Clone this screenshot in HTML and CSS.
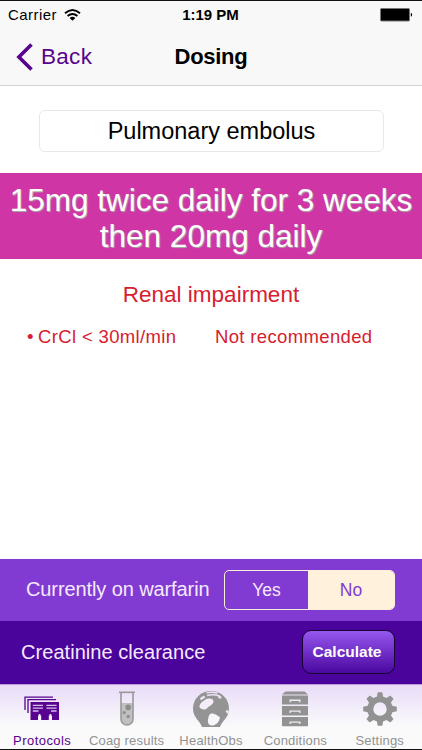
FILE: index.html
```html
<!DOCTYPE html>
<html lang="en">
<head>
    <meta charset="UTF-8">
    <meta name="viewport" content="width=device-width, initial-scale=1.0">
    <title>Dosing</title>
    <link rel="stylesheet" href="styles.css">
</head>
<body>
    <header>
        <div class="status-bar">
            <div class="carrier">
                <span>Carrier</span>
                <svg class="wifi" width="17" height="12" viewBox="0 0 17 12">
                    <path d="M1 4.3 Q8.5 -2.2 16 4.3" fill="none" stroke="#000" stroke-width="1.9"/>
                    <path d="M3.6 7 Q8.5 2.8 13.4 7" fill="none" stroke="#000" stroke-width="1.9"/>
                    <path d="M5.6 9 Q8.5 6.6 11.4 9 L8.5 11.8 Z"/>
                </svg>
            </div>
            <div class="time">1:19 PM</div>
            <svg class="battery" width="33" height="14" viewBox="0 0 33 14">
                <rect x="0.5" y="0.5" width="29" height="12.5" rx="1" stroke="#777" stroke-width="1"/>
                <path d="M30.8 4.7 Q32.2 5.2 32.2 6.8 Q32.2 8.3 30.8 8.8 Z"/>
            </svg>
        </div>
        <nav class="nav-bar">
            <a class="back" href="#">
                <svg width="17" height="28" viewBox="0 0 17 28">
                    <path d="M15.5 1.4 L2.9 14 L15.5 26.6" fill="none" stroke="#57038f" stroke-width="3.6"/>
                </svg>
                <span>Back</span>
            </a>
            <h1>Dosing</h1>
        </nav>
    </header>
    <main>
        <div class="condition">Pulmonary embolus</div>
        <div class="dose">15mg twice daily for 3 weeks<br>then 20mg daily</div>
        <h2>Renal impairment</h2>
        <div class="renal">
            <span class="bullet">•</span>
            <span class="range">CrCl &lt; 30ml/min</span>
            <span class="advice">Not recommended</span>
        </div>
    </main>
    <div class="row warfarin">
        <span class="row-label">Currently on warfarin</span>
        <div class="segmented">
            <button class="segment">Yes</button>
            <button class="segment selected">No</button>
        </div>
    </div>
    <div class="row creatinine">
        <span class="row-label">Creatinine clearance</span>
        <button class="calculate">Calculate</button>
    </div>
    <footer class="tabs">
        <a class="tab active" href="#">
            <svg width="36" height="26" viewBox="0 0 36 26">
                <path d="M1 14 V1.2 H29 M4 17 V3.7 H32" fill="none" stroke="#57038f" stroke-width="1.3"/>
                <path fill="#57038f" d="M6.5 6 H35 V24 H28 V19.5 H24.8 V24 H17.2 V19.5 H14 V24 H6.5 Z"/>
                <path d="M8.8 9.4 H19 M8.8 12.2 H19 M8.8 15 H14.5 M22.4 9.4 H32.6 M22.4 12.2 H32.6 M27 15 H32.6" fill="none" stroke="#d8bdec" stroke-width="1.3"/>
                <path d="M14.8 18 H16.4 V20 H14.8 Z M25.6 18 H27.2 V20 H25.6 Z" fill="#efe6f8"/>
            </svg>
            <span>Protocols</span>
        </a>
        <a class="tab" href="#">
            <svg width="18" height="36" viewBox="0 0 18 36">
                <path d="M3 12 H15 V28 A6 6 0 0 1 3 28 Z" fill="#c0c0c1"/>
                <path d="M3 1.5 V28 A6 6 0 0 0 15 28 V1.5" fill="none" stroke="#999" stroke-width="1.6"/>
                <path d="M1 1.3 H17" stroke="#999" stroke-width="1.6"/>
                <circle cx="10.2" cy="16.4" r="2.8" fill="#8d8d8d"/>
                <circle cx="6.2" cy="21.6" r="1.6" fill="#8d8d8d"/>
                <circle cx="10.2" cy="25.4" r="1.7" fill="#8d8d8d"/>
            </svg>
            <span>Coag results</span>
        </a>
        <a class="tab" href="#">
            <svg width="38" height="38" viewBox="0 0 38 38">
                <path d="M10 37 C8 30.5 1 28 1 18.5 A18 17.6 0 0 1 37 18.5 C37 28 30 30.5 28 37 Z" fill="#949494"/>
                <path d="M7.4 16.8 C7.6 12.6 11.4 11.4 13.8 9.2 C17 7.8 22.2 8.6 21.4 12 C20.8 15 17.4 15.6 15.2 18.2 C12.8 20.6 8.5 19.6 7.4 16.8 Z" fill="#f4edf9"/>
                <path d="M19 23.6 C22.6 22.6 24.8 25.4 28 27.2 C27.4 30.8 25.2 34.6 21 35.4 C16.4 36 15.6 32.4 16 30 C16.4 27.4 16.8 24.4 19 23.6 Z" fill="#f8f5fb"/>
                <path d="M14.5 2.8 Q20 1.6 25.5 3.2 M15 5.4 Q21 4 27 5.8" fill="none" stroke="#eee4f7" stroke-width="1.5"/>
                <path d="M8.4 9.2 L12.6 6.4 M26.5 6 L29 8.2 M34.4 20.4 L36.4 23" fill="none" stroke="#eee4f7" stroke-width="2.4"/>
            </svg>
            <span>HealthObs</span>
        </a>
        <a class="tab" href="#">
            <svg width="28" height="36" viewBox="0 0 28 36">
                <path d="M4.5 .5 H23.5 L27 3.4 H1 Z M1 4.4 H27 V13.5 H1 Z M1 15 H27 V24.4 H1 Z M1 26 H27 V35.2 H1 Z" fill="#929292"/>
                <path d="M9.2 11.2 V9.3 H18.8 V11.2 M9.2 22 V20.1 H18.8 V22 M9.2 33 V31.1 H18.8 V33" fill="none" stroke="#f0eaf5" stroke-width="1.4"/>
            </svg>
            <span>Conditions</span>
        </a>
        <a class="tab" href="#">
            <svg width="34" height="34" viewBox="-17 -17 34 34">
                <circle r="9.7" fill="none" stroke="#929292" stroke-width="6"/>
                <g fill="#929292">
                    <path id="tooth" d="M-3.4 -11 L-2.3 -16.8 H2.3 L3.4 -11 Z"/>
                    <use href="#tooth" transform="rotate(45)"/>
                    <use href="#tooth" transform="rotate(90)"/>
                    <use href="#tooth" transform="rotate(135)"/>
                    <use href="#tooth" transform="rotate(180)"/>
                    <use href="#tooth" transform="rotate(225)"/>
                    <use href="#tooth" transform="rotate(270)"/>
                    <use href="#tooth" transform="rotate(315)"/>
                </g>
            </svg>
            <span>Settings</span>
        </a>
    </footer>
</body>
</html>
```
FILE: styles.css
```css
* {
    box-sizing: border-box;
}
body {
    margin: 0;
    height: 750px;
    display: flex;
    flex-direction: column;
    overflow: hidden;
    background: #fff;
    border-top: 1px solid #111;
    border-bottom: 1px solid #111;
    font-family: "Liberation Sans", Arial, sans-serif;
    white-space: nowrap;
}
a {
    color: inherit;
    text-decoration: none;
}
button {
    font-family: inherit;
    margin: 0;
    padding: 0;
}
h1,
h2 {
    margin: 0;
}
header {
    height: 85px;
    background: #f8f8f8;
    border-bottom: 1px solid #d5d5d5;
}
.status-bar {
    height: 27px;
    padding: 0 9px 0 8px;
    display: grid;
    grid-template-columns: 1fr auto 1fr;
    align-items: center;
    font-size: 15px;
}
.carrier {
    display: flex;
    align-items: center;
    gap: 7px;
    letter-spacing: 0.45px;
}
.time {
    font-weight: bold;
    font-size: 15px;
}
.battery {
    justify-self: end;
}
.nav-bar {
    height: 57px;
    padding: 0 16px;
    display: grid;
    grid-template-columns: 1fr auto 1fr;
    align-items: center;
}
.back {
    display: flex;
    align-items: center;
    gap: 8px;
    font-size: 22.5px;
    letter-spacing: 0.3px;
    color: #57038f;
}
h1 {
    font-size: 22px;
    letter-spacing: -0.3px;
    padding-top: 1px;
}
main {
    height: 473px;
    flex: none;
    display: flex;
    flex-direction: column;
}
.condition {
    width: 345px;
    height: 42px;
    margin: 24px 0 0 39px;
    line-height: 40px;
    text-align: center;
    font-size: 23.5px;
    border: 1px solid #e8e8e8;
    border-radius: 6px;
}
.dose {
    height: 86px;
    margin-top: 21px;
    padding-top: 9px;
    background: #cf35a5;
    color: #fff;
    font-size: 31.5px;
    line-height: 36px;
    text-align: center;
    text-shadow: 1px 1px 1px #aaa;
}
h2 {
    margin-top: 22px;
    font-size: 22.5px;
    font-weight: normal;
    line-height: 28px;
    text-align: center;
    color: #d6202f;
}
.renal {
    margin-top: 17px;
    padding-left: 27px;
    display: flex;
    font-size: 18.5px;
    line-height: 22px;
    color: #d6202f;
}
.bullet {
    width: 11px;
}
.range {
    width: 177px;
    letter-spacing: 0.35px;
}
.advice {
    letter-spacing: 0.35px;
}
.row {
    flex: none;
    display: flex;
    align-items: center;
    justify-content: space-between;
    padding-right: 27px;
    color: #f6e9ff;
    font-size: 20px;
}
.row-label {
    padding-bottom: 2px;
}
.warfarin {
    height: 62px;
    padding-left: 26px;
    background: #813bd2;
}
.warfarin .row-label {
    letter-spacing: -0.1px;
}
.creatinine {
    height: 63px;
    padding-left: 21px;
    background: #4a039b;
}
.creatinine .row-label {
    padding-bottom: 0;
    letter-spacing: 0.05px;
}
.segmented {
    width: 171px;
    height: 40px;
    display: flex;
    border: 1px solid #fff0db;
    border-radius: 5px;
    overflow: hidden;
}
.segment {
    flex: 1;
    border: 0;
    background: none;
    color: #f6e9ff;
    font-size: 17.5px;
}
.segment.selected {
    flex: 0 0 86px;
    background: #fff1dc;
    color: #813bd2;
}
.calculate {
    width: 93px;
    height: 44px;
    margin-bottom: 1px;
    padding: 0 3px 0 0;
    border: 1px solid #150030;
    border-radius: 9px;
    background: linear-gradient(#9657ee, #4b08a0);
    color: #fff;
    font-size: 15.5px;
    font-weight: bold;
}
.tabs {
    flex: 1;
    display: grid;
    grid-template-columns: repeat(5, 84.4px);
    background: linear-gradient(#e9dcf8, #fafafa 65%);
    border-top: 1px solid #b99bdc;
}
.tab {
    display: grid;
    grid-template-rows: 48px 16px;
    place-items: center;
    color: #929292;
    font-size: 13px;
    line-height: 16px;
    letter-spacing: 0.2px;
}
.tab.active {
    color: #57038f;
    letter-spacing: 0.45px;
}
```
